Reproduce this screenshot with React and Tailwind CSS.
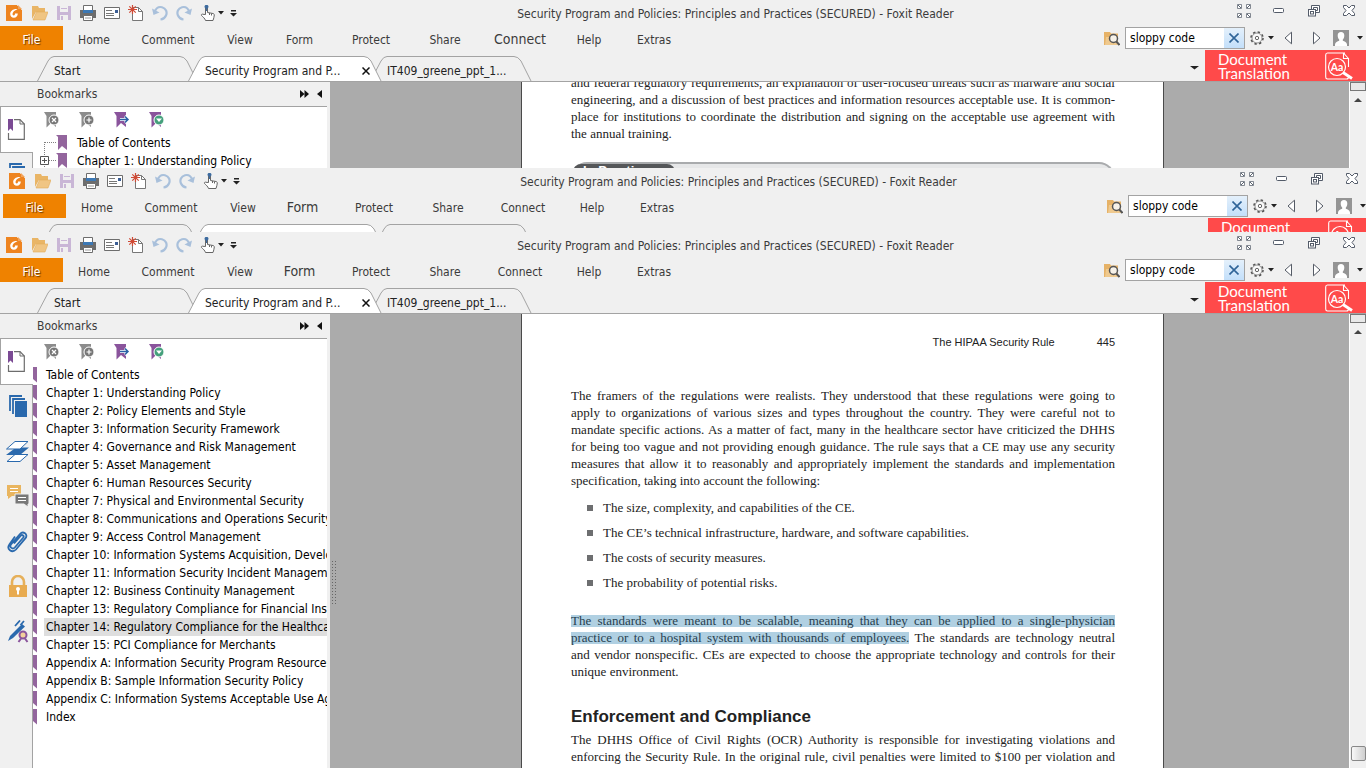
import React from "react";

const MENU = [
  { label: "Home", width: "w-[62px]" },
  { label: "Comment", width: "w-[86px]" },
  { label: "View", width: "w-[58px]" },
  { label: "Form", width: "w-[61px]" },
  { label: "Protect", width: "w-[82px]" },
  { label: "Share", width: "w-[66px]" },
  { label: "Connect", width: "w-[84px]" },
  { label: "Help", width: "w-[54px]" },
  { label: "Extras", width: "w-[76px]" },
];

const CHAPTERS = [
  "Table of Contents",
  "Chapter 1: Understanding Policy",
  "Chapter 2: Policy Elements and Style",
  "Chapter 3: Information Security Framework",
  "Chapter 4: Governance and Risk Management",
  "Chapter 5: Asset Management",
  "Chapter 6: Human Resources Security",
  "Chapter 7: Physical and Environmental Security",
  "Chapter 8: Communications and Operations Security",
  "Chapter 9: Access Control Management",
  "Chapter 10: Information Systems Acquisition, Development",
  "Chapter 11: Information Security Incident Management",
  "Chapter 12: Business Continuity Management",
  "Chapter 13: Regulatory Compliance for Financial Institutions",
  "Chapter 14: Regulatory Compliance for the Healthcare Sector",
  "Chapter 15: PCI Compliance for Merchants",
  "Appendix A: Information Security Program Resources",
  "Appendix B: Sample Information Security Policy",
  "Appendix C: Information Systems Acceptable Use Agreement",
  "Index",
];

/* ---------- toolbar icons ---------- */

function Icon({ children, size = 16, className = "" }) {
  return (
    <svg
      width={size}
      height={size}
      viewBox={`0 0 ${size} ${size}`}
      fill="none"
      className={`block shrink-0 ${className}`}
      aria-hidden="true"
    >
      {children}
    </svg>
  );
}

const FoxitIcon = () => (
  <Icon>
    <path d="M0 0h11l5 5v11H0z" fill="#ee8420" />
    <path d="M11 0h5v5z" fill="#f0f0f0" />
    <path d="M12 0l4 4h-4z" fill="#f2a45c" />
    <path
      d="M11.5 4.2C7.5 3.6 4.2 6 4.2 9c0 2.200 1.500 3.700 3.700 3.700 2.300 0 3.900-1.700 3.900-4.200H9c0 1.200-.5 1.900-1.300 1.900-.7 0-1.200-.5-1.200-1.400 0-2 2-3.600 5-4.800z"
      fill="#fff"
    />
  </Icon>
);

const FolderIcon = () => (
  <Icon>
    <path d="M0 1h6l1 2h6v4H4L0 14z" fill="#e9b566" />
    <path d="M1 15L4.500 7H16l-3 8z" fill="#f0c583" stroke="#e2ab59" strokeWidth=".6" />
  </Icon>
);

const SaveIcon = () => (
  <Icon>
    <path d="M1 1h14v14H1z" fill="#c9b6d6" />
    <path d="M4 1h8v6H4z" fill="#f0f0f0" />
    <path d="M4 10h8v5H4z" fill="#f0f0f0" />
    <path d="M5 11h2v4H5z" fill="#c9b6d6" />
    <path d="M5 3.500h6" stroke="#c9b6d6" />
  </Icon>
);

const PrintIcon = () => (
  <Icon>
    <path d="M3.500 5V.5h9V5" fill="#fff" stroke="#6d6d6d" />
    <path d="M0 5h16v8h-3v-2H3v2H0z" fill="#6d6d6d" />
    <path d="M3 5h10v3H3z" fill="#3c78b4" />
    <path d="M3.500 10.500h9v5h-9z" fill="#fff" stroke="#6d6d6d" />
    <path d="M5 13h6" stroke="#9a9a9a" />
  </Icon>
);

const MailIcon = () => (
  <Icon>
    <path d="M.5 2.500h15v11H.5z" fill="#fff" stroke="#6d6d6d" />
    <path d="M11 5h3v3h-3z" fill="#3c5f96" />
    <path d="M2 5.500h6M2 8.500h8M2 10.500h8" stroke="#777" />
  </Icon>
);

const NewDocIcon = () => (
  <Icon>
    <path d="M4.500 2.500h6l4 4v9h-10z" fill="#fff" stroke="#777" />
    <path d="M10.500 2.500v4h4" stroke="#777" />
    <path d="M4.500 0v9M0 4.500h9M1.300 1.300l6.400 6.400M7.700 1.300L1.300 7.700" stroke="#d04a35" strokeWidth="1.2" />
  </Icon>
);

const UndoIcon = () => (
  <Icon>
    <path d="M2.500 7C4 3 7 1.500 10 2.200c4 1 5.500 5 4 8.300-1 2.300-3 3.700-5.500 4" stroke="#a9c0db" strokeWidth="2.200" />
    <path d="M0 3.500l1.500 6.500L7.500 7.500z" fill="#a9c0db" />
  </Icon>
);

const RedoIcon = () => (
  <Icon>
    <path d="M13.500 7C12 3 9 1.500 6 2.200c-4 1-5.500 5-4 8.300 1 2.300 3 3.700 5.500 4" stroke="#a9c0db" strokeWidth="2.200" />
    <path d="M16 3.500L14.500 10l-6-2.500z" fill="#a9c0db" />
  </Icon>
);

const HandIcon = () => (
  <Icon>
    <path
      d="M5.500 9.500v-7c0-1 2-1 2 0v5l5.500 1c1 .3 1.300.8 1.300 1.500 0 2-.8 3.500-1.300 5.500H5.500c-.5-2-2.500-3.500-4-5-.6-1 .6-1.800 1.500-1.200z"
      fill="#fff"
      stroke="#666"
    />
    <path d="M9.500 8v2M11.500 8.500v2" stroke="#666" />
    <circle cx="6.500" cy="1.800" r="2" fill="#3d6b9f" />
    <path d="M6 3h1v3H6z" fill="#3d6b9f" />
  </Icon>
);

function Caret({ width = 6 }) {
  return (
    <svg width={width} height="4" viewBox="0 0 6 4" preserveAspectRatio="none" className="block shrink-0" aria-hidden="true">
      <path d="M0 0h6L3 3.500z" fill="#222" />
    </svg>
  );
}

const CustomizeIcon = () => (
  <svg width="7" height="7" viewBox="0 0 7 7" className="block" aria-hidden="true">
    <path d="M1 0h5v1.500H1zM0 3h7L3.500 6.500z" fill="#222" />
  </svg>
);

const FullscreenIcon = () => (
  <Icon size={14}>
    <g stroke="#5c6470">
      <path d="M.5.500h4v4h-4zM9.500.500h4v4h-4zM.5 9.500h4v4h-4zM9.500 9.500h4v4h-4z" fill="#fff" strokeOpacity=".75" />
      <path d="M1 1l3 3M13 1l-3 3M1 13l3-3M13 13l-3-3" />
    </g>
  </Icon>
);

const MinimizeIcon = () => (
  <Icon size={12}>
    <rect x=".5" y="3.500" width="10" height="4" rx="1" fill="#fff" stroke="#535b69" />
  </Icon>
);

const RestoreIcon = () => (
  <Icon size={12}>
    <path d="M3.500 4V.5h8v7H8" fill="#fff" stroke="#535b69" />
    <path d="M5.500 4V2.500h4v3H8" stroke="#535b69" />
    <rect x=".5" y="4.500" width="7" height="6.500" fill="#fff" stroke="#535b69" />
    <rect x="2.500" y="6.500" width="3" height="2.500" stroke="#535b69" />
  </Icon>
);

const CloseIcon = () => (
  <Icon size={12}>
    <path
      d="M.5.500h3L6 3 8.500.5h3v2L9 5.500l2.500 3v2h-3L6 8l-2.500 2.500h-3v-2l2.500-3-2.500-3z"
      fill="#fff"
      stroke="#535b69"
    />
  </Icon>
);

const FindIcon = () => (
  <Icon>
    <path d="M0 2h6l1 1.500h7V15H0z" fill="#e6b267" />
    <path d="M2 7h12v8H1z" fill="#efc98e" />
    <circle cx="9.500" cy="8.500" r="4" fill="#f6f1e8" stroke="#555" strokeWidth="1.500" />
    <path d="M12.300 11.500L15.500 15" stroke="#555" strokeWidth="2" />
  </Icon>
);

const GearIcon = () => (
  <Icon size={14}>
    <circle cx="7" cy="7" r="6" stroke="#555" strokeWidth="1.600" strokeDasharray="2.400 2.300" />
    <circle cx="7" cy="7" r="5" fill="#fafafa" stroke="#777" strokeWidth=".8" />
    <circle cx="7" cy="7" r="1.700" stroke="#666" />
  </Icon>
);

const AvatarIcon = () => (
  <Icon>
    <path d="M0 0h16v16H0z" fill="#949494" />
    <path d="M8 2c2.200 0 3.300 1.500 3.300 3.500S10.500 9 9.800 9.500v1.200c1.700.8 4 1.300 4.200 3.800V16H2v-1.500c.2-2.500 2.500-3 4.200-3.800V9.500C5.500 9 4.700 7.500 4.700 5.500S5.800 2 8 2z" fill="#fff" />
  </Icon>
);

const TranslateIcon = () => (
  <Icon size={28}>
    <g stroke="#fff">
      <path d="M20 1H2.500Q.7 1 .7 3v22q0 2 1.800 2h19q2 0 2-2M18.500 1v5.500h5V15M18.500 1l5 5.500" strokeWidth="1.100" />
      <circle cx="12" cy="15" r="8.500" strokeWidth="1.200" />
      <path d="M18 20.500l9 6" strokeWidth="3" />
    </g>
    <text x="12" y="18.500" textAnchor="middle" fill="#fff" fontSize="10.500" fontFamily="Lato, sans-serif" fontWeight="700">
      Aa
    </text>
  </Icon>
);

/* ---------- ribbon ---------- */

function TabShape({ width, active }) {
  return (
    <svg width={width} height="25" viewBox={`0 0 ${width} 25`} className="absolute left-0 top-0" aria-hidden="true">
      <path
        d={`M.5 25L11 5Q13.500 .5 17 .5H${width - 18}Q${width - 14} .5 ${width - 11} 5L${width - 1} 25`}
        fill={active ? "#fff" : "#f0f0f0"}
        stroke="#a3a3a3"
      />
    </svg>
  );
}

function QuickAccess() {
  const tools = [
    ["Open", FolderIcon],
    ["Save", SaveIcon],
    ["Print", PrintIcon],
    ["Email", MailIcon],
    ["New", NewDocIcon],
    ["Undo", UndoIcon],
    ["Redo", RedoIcon],
  ];
  return (
    <div className="flex items-center w-[245px] pl-[6px]">
      <FoxitIcon />
      <div className="flex items-center gap-2 ml-[10px]">
        {tools.map(([name, ToolIcon]) => (
          <button key={name} type="button" aria-label={name}>
            <ToolIcon />
          </button>
        ))}
        <div className="flex items-center gap-[6px]">
          <button type="button" aria-label="Hand tool" className="flex items-center gap-[2px]">
            <HandIcon />
            <Caret />
          </button>
          <button type="button" aria-label="Customize toolbar">
            <CustomizeIcon />
          </button>
        </div>
      </div>
    </div>
  );
}

function WindowButtons() {
  const items = [
    ["Full screen", FullscreenIcon],
    ["Minimize", MinimizeIcon],
    ["Restore", RestoreIcon],
    ["Close", CloseIcon],
  ];
  return (
    <div className="flex self-start">
      {items.map(([name, ItemIcon]) => (
        <button key={name} type="button" aria-label={name} className="flex items-center justify-center w-[35px] h-[22px]">
          <ItemIcon />
        </button>
      ))}
    </div>
  );
}

function SearchArea() {
  return (
    <div className="flex items-center ml-auto pr-[3px]">
      <FindIcon />
      <div className="flex w-[120px] h-[22px] ml-[5px] border border-[#a3a3a3] bg-white">
        <input
          type="text"
          aria-label="Find"
          defaultValue="sloppy code"
          className="w-0 flex-1 pl-1 text-[12px] text-black outline-none"
        />
        <button type="button" aria-label="Clear" className="flex items-center justify-center w-5 bg-linear-to-b from-[#e4f0fb] to-[#c3dffa]">
          <svg width="10" height="10" viewBox="0 0 10 10" aria-hidden="true">
            <path d="M.5.500l9 9M9.500.500l-9 9" stroke="#2f6498" strokeWidth="1.600" />
          </svg>
        </button>
      </div>
      <button type="button" aria-label="Search options" className="flex items-center gap-1 ml-[5px]">
        <GearIcon />
        <Caret />
      </button>
      <button type="button" aria-label="Previous" className="ml-[10px]">
        <svg width="9" height="14" viewBox="0 0 9 14" className="block" aria-hidden="true">
          <path d="M7.500 1.200v11.600L1 7z" fill="#fff" stroke="#555b66" />
        </svg>
      </button>
      <button type="button" aria-label="Next" className="ml-[19px]">
        <svg width="9" height="14" viewBox="0 0 9 14" className="block" aria-hidden="true">
          <path d="M1.500 1.200v11.600L8 7z" fill="#fff" stroke="#555b66" />
        </svg>
      </button>
      <button type="button" aria-label="Account" className="flex items-center gap-2 ml-[12px]">
        <AvatarIcon />
        <Caret />
      </button>
    </div>
  );
}

// compact = only the top edge of the tab row stays in view, so the tabs carry no labels
function Ribbon({ emphasis, compact }) {
  return (
    <header className="w-screen shrink-0 bg-[#f0f0f0] text-[#3b3b3b]">
      <div className="flex items-center h-[26px]">
        <QuickAccess />
        <h1 className="flex-1 pt-px text-center text-[12px] whitespace-nowrap">
          Security Program and Policies: Principles and Practices (SECURED) - Foxit Reader
        </h1>
        <WindowButtons />
      </div>

      <nav className="flex items-center h-6">
        <button type="button" className="w-[63px] h-6 pt-[3px] bg-[#ef8200] text-[12px] text-white [text-shadow:1px_1px_1px_#6b3a00]">
          File
        </button>
        {MENU.map((item) => (
          <button
            key={item.label}
            type="button"
            className={`${item.width} h-6 pt-[3px] text-center ${item.label === emphasis ? "text-[14px]" : "text-[12px]"}`}
          >
            {item.label}
          </button>
        ))}
        <SearchArea />
      </nav>

      <div className="flex h-8 border-b border-[#a3a3a3]">
        <div className="flex items-end pl-[37px] text-[12px] text-[#222]">
          <button type="button" aria-label="Start" className="relative w-[161px] h-[25px] pt-[5px] text-left">
            <TabShape width={161} />
            {!compact && <span className="relative pl-[17px]">Start</span>}
          </button>
          <button
            type="button"
            aria-label="Security Program and Policies"
            className="relative z-10 flex items-center justify-between w-[194px] h-[25px] -ml-[10px] pt-[5px] pl-[17px] pr-[12px]"
          >
            <TabShape width={194} active />
            {!compact && (
              <>
                <span className="relative">Security Program and P...</span>
                <svg width="8" height="8" viewBox="0 0 8 8" className="relative" aria-hidden="true">
                  <path d="M.5.500l7 7M7.500.500l-7 7" stroke="#111" strokeWidth="1.500" />
                </svg>
              </>
            )}
          </button>
          <button type="button" aria-label="IT409 presentation" className="relative w-[162px] h-[25px] -ml-[12px] pt-[5px] text-left">
            <TabShape width={162} />
            {!compact && <span className="relative pl-[17px]">IT409_greene_ppt_1...</span>}
          </button>
        </div>
        <button type="button" aria-label="Tab list" className="ml-auto mr-[6px] pt-1">
          <Caret width={9} />
        </button>
        <a
          href="#translate"
          className="flex items-start justify-between w-[161px] pt-[2px] px-[13px] bg-[#ff4a4a] text-white font-['Lato',sans-serif] text-[15px] leading-[14px]"
        >
          <span>
            Document
            {!compact && (
              <>
                <br />
                Translation
              </>
            )}
          </span>
          <TranslateIcon />
        </a>
      </div>
    </header>
  );
}

/* ---------- bookmarks panel ---------- */

function BookmarkTool({ name, color, children }) {
  return (
    <button type="button" aria-label={name}>
      <Icon>
        <path d="M0 0h12v15L7 11l-4.500 4.500V4z" fill={color} />
        {children}
      </Icon>
    </button>
  );
}

function BookmarkTools() {
  return (
    <div className="flex items-start gap-[19px] pl-[11px] pt-[5px] h-[27px]">
      <BookmarkTool name="Delete bookmark" color="#8c8c8c">
        <circle cx="10" cy="8" r="5" fill="#777" stroke="#fff" />
        <path d="M8 6l4 4M12 6l-4 4" stroke="#fff" strokeWidth="1.200" />
      </BookmarkTool>
      <BookmarkTool name="Add bookmark" color="#8c8c8c">
        <circle cx="10" cy="8" r="5" fill="#777" stroke="#fff" />
        <path d="M7.500 8h5M10 5.500v5" stroke="#fff" strokeWidth="1.200" />
      </BookmarkTool>
      <BookmarkTool name="Expand bookmark" color="#8a549c">
        <path d="M6 7.500h8M11 4l4 3.500-4 3.500" stroke="#fff" strokeWidth="3" />
        <path d="M6 7.500h8M11 4.500l3 3-3 3" stroke="#2a62a5" strokeWidth="1.500" />
      </BookmarkTool>
      <BookmarkTool name="Bookmark options" color="#8a549c">
        <circle cx="10" cy="8" r="5" fill="#45a07c" stroke="#fff" />
        <path d="M7 6.500h6L10 10z" fill="#fff" />
      </BookmarkTool>
    </div>
  );
}

const SIDE_ICONS = [
  {
    name: "Pages",
    art: (
      <>
        <path d="M4 16V1h12M7 19V4h12" stroke="#2a69ad" strokeWidth="1.800" />
        <path d="M9 6h12v16H9z" fill="#2a69ad" />
      </>
    ),
  },
  {
    name: "Layers",
    art: (
      <>
        <path d="M1 21.500h13l8-7H9z" fill="#fff" stroke="#2a69ad" />
        <path d="M0 15h14l9-7.500H10z" fill="#2a69ad" />
        <path d="M.5 9h13.500l8-7.500H9z" fill="#fff" stroke="#2a69ad" />
      </>
    ),
  },
  {
    name: "Comments",
    art: (
      <>
        <path d="M1 0h14v11H6l-4 3v-3H1z" fill="#e9b55f" />
        <path d="M4 3.500h8M4 6.500h8" stroke="#fff" />
        <path d="M9 9h14v10h-1v3l-4-3H9z" fill="#787878" stroke="#f0f0f0" />
        <path d="M12 12.500h8M12 15.500h8" stroke="#fff" />
      </>
    ),
  },
  {
    name: "Attachments",
    art: (
      <path
        d="M8 13.500l7-8c1.200-1.300 3.500.5 2.300 2l-8.500 10c-2.200 2.300-5.800-.3-3.800-3l9-10.500c3-3.500 8.500.2 5.500 4.200l-9.500 11.300c-4 4.200-10-.5-6.500-5.300L9 6.500"
        stroke="#2a69ad"
        strokeWidth="1.800"
      />
    ),
  },
  {
    name: "Security",
    art: (
      <>
        <path d="M6 10V7a6 6 0 0 1 12 0v3" stroke="#e6b05a" strokeWidth="2.600" />
        <path d="M3 10h18v12H3z" fill="#e8ab50" />
        <circle cx="12" cy="14" r="2" fill="#fff" />
        <path d="M11 14h2v5.500h-2z" fill="#fff" />
      </>
    ),
  },
  {
    name: "Signatures",
    art: (
      <>
        <path d="M2 21l2-5L16 4l3 2.500L7 18z" fill="#2a69ad" />
        <path d="M9 6l5-5.500M14.500 5L18 1" stroke="#2a69ad" strokeWidth="1.800" />
        <circle cx="17" cy="15" r="3.500" fill="#f3d09b" stroke="#8a549c" strokeWidth="2" />
        <path d="M15 18.500l-2.500 3.500M19 18.500l2.500 3.500" stroke="#8a549c" strokeWidth="2" />
      </>
    ),
  },
];

function SideBar() {
  return (
    <div className="flex flex-col w-[33px] shrink-0">
      <button
        type="button"
        aria-label="Bookmarks"
        className="flex items-start justify-center h-[46px] pt-3 pr-[3px] shrink-0 bg-white border-l border-b border-[#a3a3a3]"
      >
        <Icon size={22} className="ml-[5px]">
          <path d="M1.500.700H13l4.300 4.300v15.300H1.500z" stroke="#6d6d6d" strokeWidth="1.200" />
          <path d="M13 .7V5h4.500" stroke="#6d6d6d" />
          <path d="M0 0h7v14H0z" fill="#fff" />
          <path d="M1 0h5v12l-2.500-2.500L1 12z" fill="#7b4a94" />
        </Icon>
      </button>
      <div className="flex flex-col flex-1 items-center gap-[22px] pt-[10px] border-r border-[#a3a3a3]">
        {SIDE_ICONS.map((item) => (
          <button key={item.name} type="button" aria-label={item.name} className="pl-[3px]">
            <Icon size={23}>{item.art}</Icon>
          </button>
        ))}
      </div>
    </div>
  );
}

// tree = expanded view with dotted guide lines and full bookmark glyphs
function BookmarkRow({ title, tree, first, selected }) {
  return (
    <li className="flex items-stretch h-[18px]">
      {tree ? (
        <span className="flex w-[42px] shrink-0">
          <svg width="37" height="18" viewBox="0 0 37 18" aria-hidden="true">
            <path d={first ? "M11.500 8v10M12 8.500h11" : "M11.500 0v18M12 8.500h11"} stroke="#808080" strokeDasharray="1 1" />
            {!first && <path d="M7.500 4.500h8v8h-8zM9 8.500h5M11.500 6v5" fill="#fff" stroke="#555" />}
            <path d="M23 1h11v15l-5-4-4 4V3z" fill="#93659d" />
          </svg>
        </span>
      ) : (
        <span className="flex w-[11px] shrink-0">
          <svg width="4" height="18" viewBox="0 0 4 18" aria-hidden="true">
            <path d="M0 1h4v15.500L0 13z" fill="#93659d" />
          </svg>
        </span>
      )}
      <a
        href="#page"
        className={`flex-1 pl-[2px] overflow-hidden whitespace-nowrap text-[12px] leading-[18px] text-black ${selected ? "bg-[#dedede]" : ""}`}
      >
        {title}
      </a>
    </li>
  );
}

function BookmarksPanel({ items, tree, selected }) {
  return (
    <aside className="flex flex-col w-[330px] shrink-0 pr-[3px] bg-[#f0f0f0]">
      <div className="flex items-center h-[25px] shrink-0 pl-[37px] border-b border-[#a3a3a3] text-[12px] text-[#3b3b3b]">
        <h2 className="flex-1">Bookmarks</h2>
        <button type="button" aria-label="Expand panel">
          <svg width="9" height="8" viewBox="0 0 9 8" className="block" aria-hidden="true">
            <path d="M0 0l4.500 4L0 8zM4.500 0L9 4 4.500 8z" fill="#111" />
          </svg>
        </button>
        <button type="button" aria-label="Hide panel" className="ml-2 mr-[5px]">
          <svg width="5" height="8" viewBox="0 0 5 8" className="block" aria-hidden="true">
            <path d="M5 0v8L0 4z" fill="#111" />
          </svg>
        </button>
      </div>
      <div className="flex flex-1 min-h-0">
        <SideBar />
        <div className="flex-1 min-w-0 bg-white">
          <BookmarkTools />
          <ul>
            {items.map((title, i) => (
              <BookmarkRow key={title} title={title} tree={tree} first={i === 0} selected={i === selected} />
            ))}
          </ul>
        </div>
      </div>
    </aside>
  );
}

/* ---------- document area ---------- */

// Each entry in lines is set as one full line of justified text.
function Lines({ lines, children }) {
  return (
    <p className="text-[13px] leading-[17px]">
      {children}
      {lines.map((line, i) => (
        <span key={line} className={`block whitespace-nowrap ${i === lines.length - 1 ? "" : "[text-align-last:justify]"}`}>
          {line}
        </span>
      ))}
    </p>
  );
}

function Highlight({ children }) {
  return (
    <mark className="bg-transparent bg-linear-to-r from-[#b0d0e2] to-[#b0d0e2] bg-[length:100%_12px] bg-center bg-no-repeat text-[#27404f]">
      {children}
    </mark>
  );
}

function Viewer({ thumb, children }) {
  return (
    <div className="flex flex-1 min-w-0 bg-[#ababab]">
      <div className="flex items-center w-[6px] shrink-0">
        {thumb && (
          <div className="w-[5px] h-[45px] ml-px mt-[82px] bg-[radial-gradient(#666_1px,transparent_1px)] bg-[size:3px_3px]"></div>
        )}
      </div>
      <main className="flex-1 min-w-0 flex justify-center">
        <article className="w-[643px] pl-[49px] pr-[48px] border-x border-[#4a4a4a] bg-white text-[#222] font-['Liberation_Serif',serif]">
          {children}
        </article>
      </main>
      <div className="flex flex-col items-center w-[17px] shrink-0 bg-[#f0f0f0] border-l border-white">
        <div className="w-full h-[9px] shrink-0 border border-[#777] bg-[#e8e8e8]"></div>
        <svg width="8" height="4" viewBox="0 0 8 4" className="mt-[7px]" aria-hidden="true">
          <path d="M0 4h8L4 0z" fill="#444" />
        </svg>
        {thumb && (
          <div className="w-[15px] h-[15px] mt-auto mb-[7px] rounded-[2px] border border-[#888] bg-linear-to-r from-[#f8f8f8] to-[#cfcfcf]"></div>
        )}
      </div>
    </div>
  );
}

function TrainingPage() {
  return (
    <>
      <div className="-mt-2">
        <Lines
          lines={[
            "and federal regulatory requirements, an explanation of user-focused threats such as malware and social",
            "engineering, and a discussion of best practices and information resources acceptable use. It is common-",
            "place for institutions to coordinate the distribution and signing on the acceptable use agreement with",
            "the annual training.",
          ]}
        />
      </div>
      <section className="mt-5 h-10 rounded-t-2xl border-2 border-b-0 border-[#a9abad] bg-[#e6e7e8]">
        <h3 className="w-[102px] h-5 pl-[10px] rounded-t-lg bg-[#555759] text-white text-[13px] leading-[13px] font-bold font-['Liberation_Sans',sans-serif]">
          In Practice
        </h3>
      </section>
    </>
  );
}

function HipaaPage() {
  return (
    <>
      <div className="flex justify-end gap-[42px] pt-5 pb-9 text-[11px] leading-[17px] font-['Liberation_Sans',sans-serif]">
        <span>The HIPAA Security Rule</span>
        <span>445</span>
      </div>
      <Lines
        lines={[
          "The framers of the regulations were realists. They understood that these regulations were going to",
          "apply to organizations of various sizes and types throughout the country. They were careful not to",
          "mandate specific actions. As a matter of fact, many in the healthcare sector have criticized the DHHS",
          "for being too vague and not providing enough guidance. The rule says that a CE may use any security",
          "measures that allow it to reasonably and appropriately implement the standards and implementation",
          "specification, taking into account the following:",
        ]}
      />
      <ul className="flex flex-col gap-2 mt-[10px] mb-[21px] pl-4 text-[13px] leading-[17px]">
        {[
          "The size, complexity, and capabilities of the CE.",
          "The CE’s technical infrastructure, hardware, and software capabilities.",
          "The costs of security measures.",
          "The probability of potential risks.",
        ].map((item) => (
          <li key={item} className="flex items-center gap-[10px]">
            <span className="w-[6px] h-[6px] bg-[#6d6e70]"></span>
            {item}
          </li>
        ))}
      </ul>
      <Lines
        lines={[
          "and vendor nonspecific. CEs are expected to choose the appropriate technology and controls for their",
          "unique environment.",
        ]}
      >
        <span className="block whitespace-nowrap [text-align-last:justify]">
          <Highlight>The standards were meant to be scalable, meaning that they can be applied to a single-physician</Highlight>
        </span>
        <span className="block whitespace-nowrap [text-align-last:justify]">
          <Highlight>practice or to a hospital system with thousands of employees.</Highlight> The standards are technology neutral
        </span>
      </Lines>
      <h3 className="mt-[27px] mb-1 text-[17px] leading-5 font-bold font-['Liberation_Sans',sans-serif]">
        Enforcement and Compliance
      </h3>
      <p className="text-[13px] leading-[17px]">
        <span className="block whitespace-nowrap [text-align-last:justify]">
          The DHHS Office of Civil Rights (OCR) Authority is responsible for investigating violations and
        </span>
        <span className="block whitespace-nowrap [text-align-last:justify]">
          enforcing the Security Rule. In the original rule, civil penalties were limited to $100 per violation and
        </span>
      </p>
    </>
  );
}

function App() {
  return (
    <div className="flex flex-col h-screen overflow-hidden bg-[#f0f0f0] font-['DejaVu_Sans_Condensed','Noto_Sans',sans-serif]">
      <section className="flex flex-col h-[168px] shrink-0 overflow-hidden">
        <Ribbon emphasis="Connect" />
        <div className="flex flex-1 min-h-0 overflow-hidden">
          <BookmarksPanel items={CHAPTERS.slice(0, 2)} tree />
          <Viewer>
            <TrainingPage />
          </Viewer>
        </div>
      </section>

      <section className="h-16 shrink-0 pl-[3px] overflow-hidden">
        <Ribbon emphasis="Form" compact />
      </section>

      <section className="flex flex-col flex-1 min-h-0 overflow-hidden">
        <Ribbon emphasis="Form" />
        <div className="flex flex-1 min-h-0 overflow-hidden">
          <BookmarksPanel items={CHAPTERS} selected={14} />
          <Viewer thumb>
            <HipaaPage />
          </Viewer>
        </div>
      </section>
    </div>
  );
}

export default App;
